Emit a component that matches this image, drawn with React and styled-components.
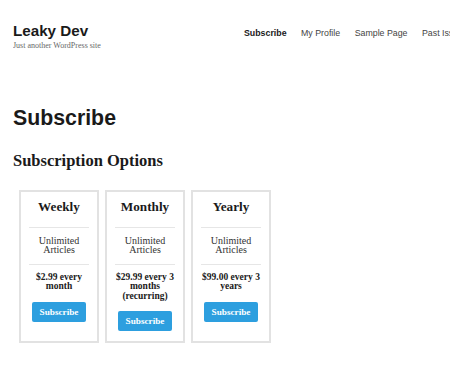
import React from "react";
import styled, { createGlobalStyle } from "styled-components";

const GlobalStyle = createGlobalStyle`
  html, body {
    margin: 0;
    padding: 0;
    background: #fff;
    overflow: hidden;
  }
  body {
    color: #1a1a1a;
    font-family: "Liberation Serif", "Times New Roman", serif;
  }
  * {
    box-sizing: border-box;
  }
`;

const plans = [
  { name: "Weekly", feature: "Unlimited Articles", price: "$2.99 every month" },
  { name: "Monthly", feature: "Unlimited Articles", price: "$29.99 every 3 months (recurring)" },
  { name: "Yearly", feature: "Unlimited Articles", price: "$99.00 every 3 years" },
];

const menu = ["Subscribe", "My Profile", "Sample Page", "Past Issues"];

function App() {
  return (
    <Page>
      <GlobalStyle />
      <Header>
        <Brand>
          <SiteTitle>Leaky Dev</SiteTitle>
          <Tagline>Just another WordPress site</Tagline>
        </Brand>
        <Nav>
          {menu.map((item, i) => (
            <NavLink key={item} $active={i === 0}>{item}</NavLink>
          ))}
        </Nav>
      </Header>

      <Main>
        <PageTitle>Subscribe</PageTitle>
        <SectionTitle>Subscription Options</SectionTitle>
        <Plans>
          {plans.map((plan) => (
            <Plan key={plan.name}>
              <PlanName>{plan.name}</PlanName>
              <Feature>{plan.feature}</Feature>
              <Price>{plan.price}</Price>
              <SubscribeBtn>Subscribe</SubscribeBtn>
            </Plan>
          ))}
        </Plans>
      </Main>
    </Page>
  );
}

const Page = styled.div`
  width: 450px;
  padding: 0 0 0 13px;
`;

const Header = styled.header`
  display: flex;
  align-items: baseline;
  padding-top: 22px;
  overflow: hidden;
`;

const Brand = styled.div`
  display: flex;
  flex-direction: column;
  flex: 0 0 231px;
`;

const SiteTitle = styled.div`
  font-family: "Liberation Sans", Arial, sans-serif;
  font-weight: 700;
  font-size: 15.2px;
  line-height: 18px;
  color: #1a1a1a;
`;

const Tagline = styled.div`
  font-size: 8px;
  line-height: 11px;
  color: #686868;
`;

const Nav = styled.nav`
  display: flex;
  gap: 14.5px;
  flex: none;
  white-space: nowrap;
`;

const NavLink = styled.span`
  font-family: "Liberation Sans", Arial, sans-serif;
  font-size: 8.8px;
  font-weight: ${(p) => (p.$active ? 700 : 400)};
  color: ${(p) => (p.$active ? "#1a1a1a" : "#444")};
`;

const Main = styled.main`
  display: flex;
  flex-direction: column;
`;

const PageTitle = styled.h1`
  margin: 55px 0 0;
  font-family: "Liberation Sans", Arial, sans-serif;
  font-weight: 700;
  font-size: 21.3px;
  line-height: 25.5px;
`;

const SectionTitle = styled.h2`
  margin: 19.5px 0 0;
  font-weight: 700;
  font-size: 16.5px;
  line-height: 20px;
`;

const Plans = styled.div`
  display: flex;
  gap: 6px;
  margin: 19px 0 0 6px;
`;

const Plan = styled.div`
  width: 80px;
  display: flex;
  flex-direction: column;
  align-items: center;
  padding: 0 8px 10px;
  border: 2px solid #e2e2e2;
  text-align: center;
`;

const PlanName = styled.div`
  align-self: stretch;
  padding: 6.5px 0 12.5px;
  font-weight: 700;
  font-size: 13.2px;
  line-height: 16px;
  border-bottom: 1px solid #e6e6e6;
`;

const Feature = styled.div`
  align-self: stretch;
  padding: 8px 0 9px;
  font-size: 10px;
  line-height: 9.4px;
  color: #333;
  border-bottom: 1px solid #e6e6e6;
`;

const Price = styled.div`
  align-self: stretch;
  padding: 8px 0 0;
  font-weight: 700;
  font-size: 9.5px;
  line-height: 9.4px;
`;

const SubscribeBtn = styled.button`
  margin-top: 10.4px;
  height: 20px;
  width: 54px;
  padding: 0;
  border: none;
  border-radius: 2px;
  background: #2d9fdf;
  color: #fff;
  font-family: "Liberation Serif", "Times New Roman", serif;
  font-weight: 700;
  font-size: 9.2px;
  cursor: pointer;
`;

export default App;
